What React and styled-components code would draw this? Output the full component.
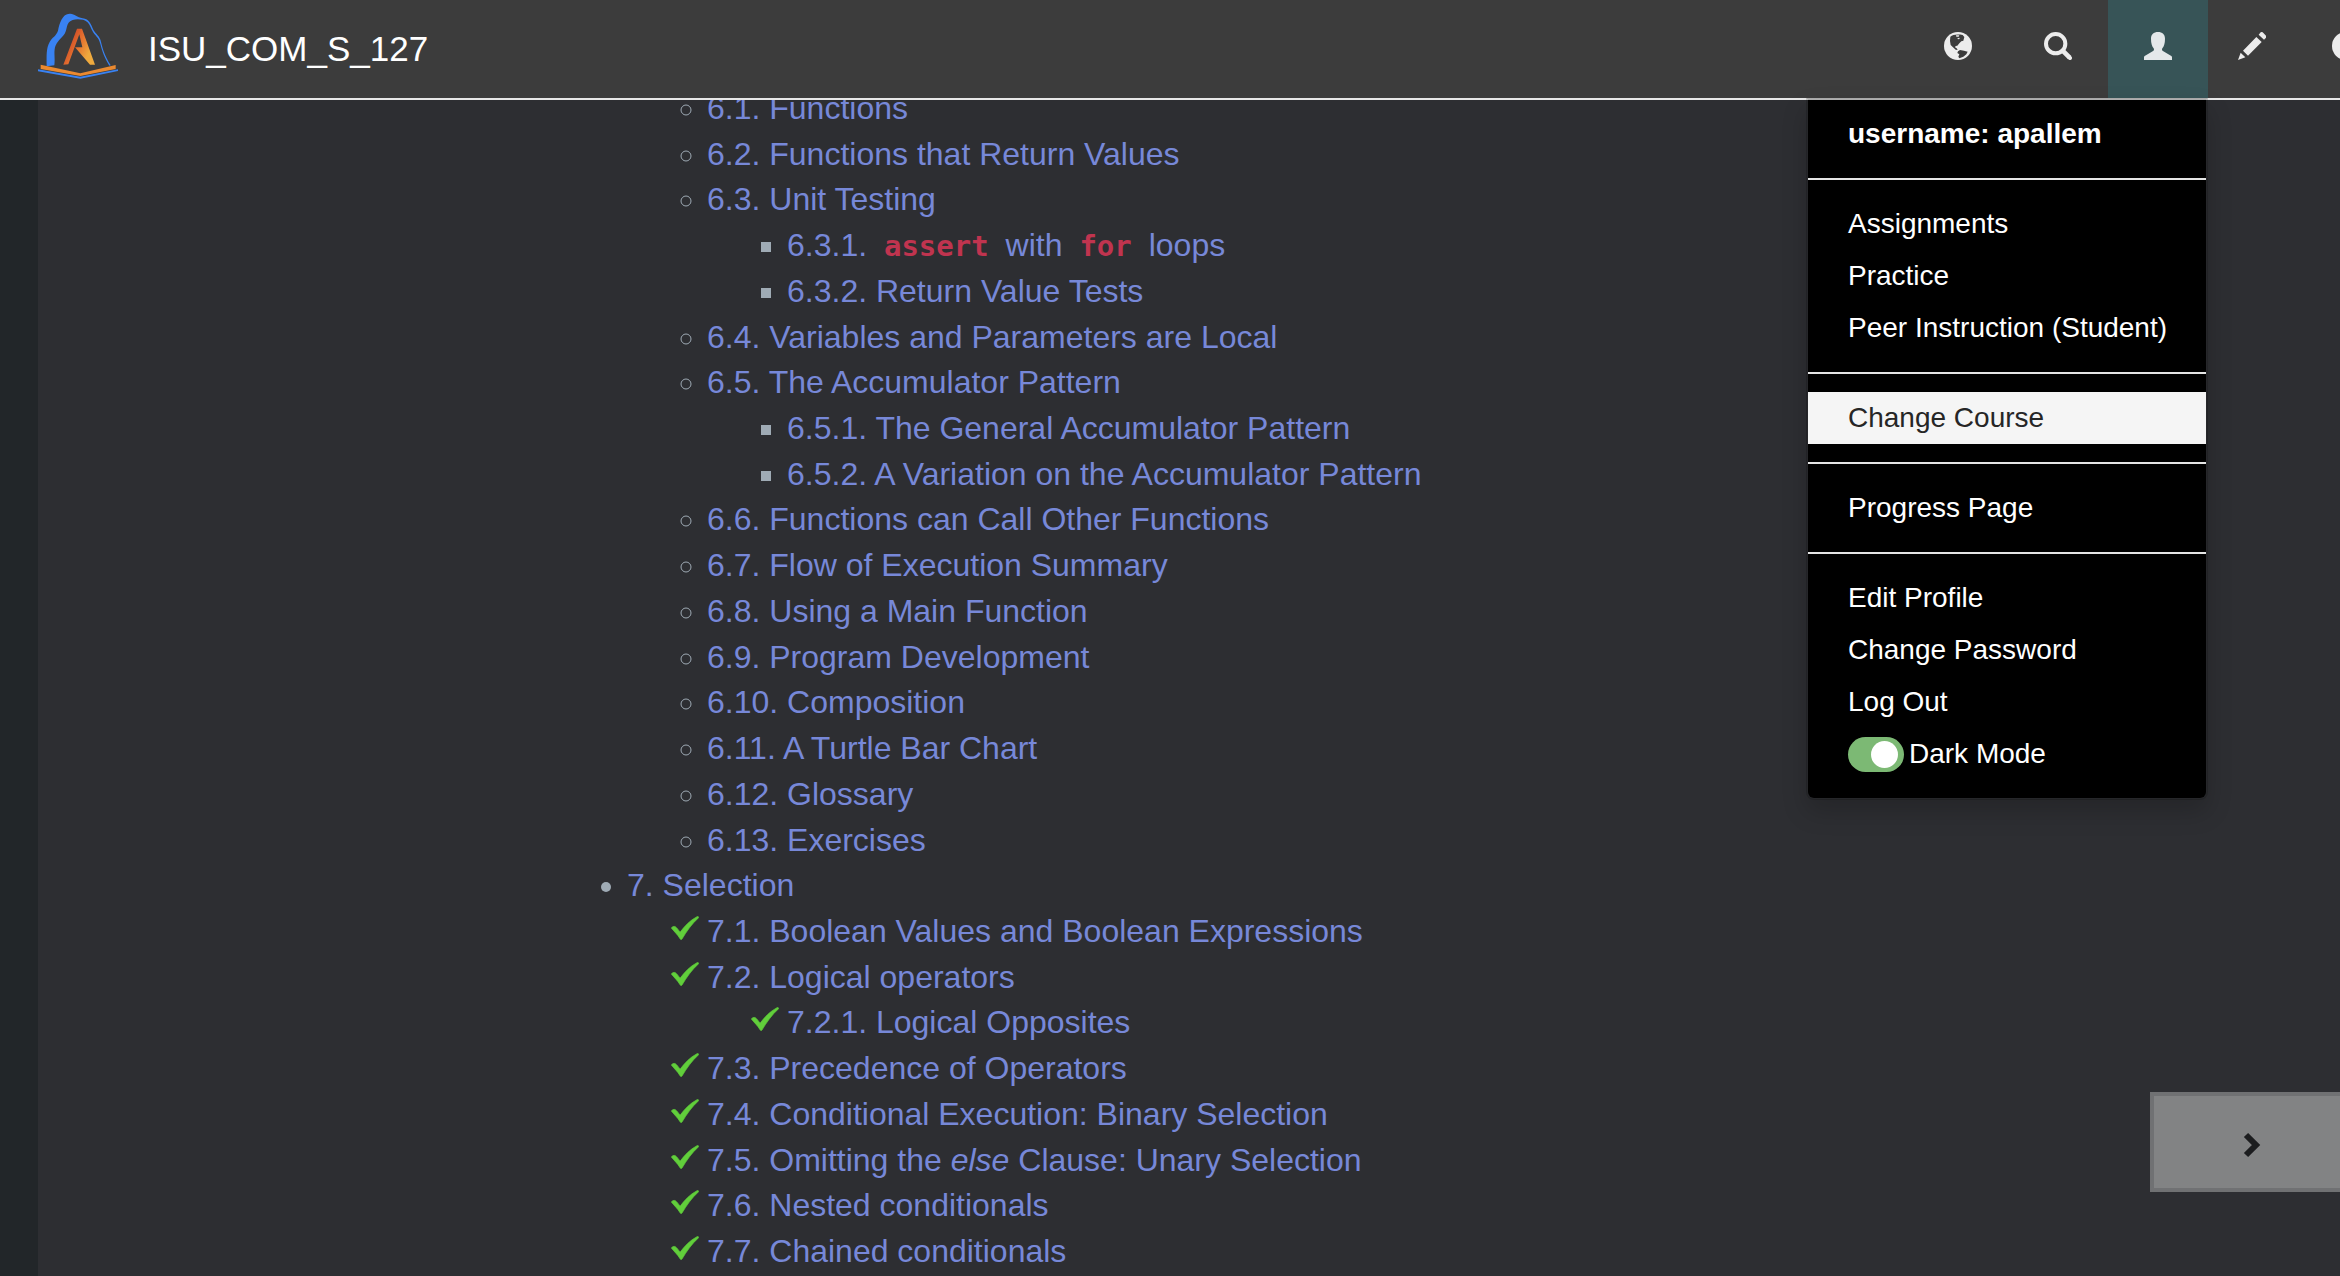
import React from "react";
import styled, { createGlobalStyle, css } from "styled-components";

const GlobalStyle = createGlobalStyle`
  * { box-sizing: border-box; }
  body {
    margin: 0;
    background: #222629;
    font-family: "Liberation Sans", Arial, sans-serif;
  }
`;

const Page = styled.div`
  display: flex;
  flex-direction: column;
  height: 100vh;
  overflow: hidden;
`;

const Navbar = styled.header`
  position: relative;
  z-index: 2;
  flex: none;
  display: flex;
  justify-content: space-between;
  height: 100px;
  background: #3c3c3c;
  border-bottom: 2px solid #e7e7e7;
`;

const Brand = styled.a`
  display: flex;
  align-items: center;
  gap: 30px;
  padding-left: 38px;
  color: #fff;
  font-size: 35px;
  line-height: 40px;
  text-decoration: none;
`;

const Logo = styled.svg`
  display: block;
  width: 80px;
  height: 66px;
  margin-bottom: 6px;
`;

const NavItems = styled.ul`
  display: flex;
  margin: 0 -56px 0 0;
  padding: 0;
  list-style: none;
`;

const NavItem = styled.li`
  position: relative;
  display: flex;
`;

const NavButton = styled.button`
  display: flex;
  justify-content: center;
  align-items: flex-start;
  width: ${(p) => (p.$narrow ? 88 : 100)}px;
  margin: 0 ${(p) => (p.$narrow ? 6 : 0)}px 0 0;
  padding: 32px 0 0;
  border: 0;
  background: ${(p) => (p.$open ? "#375457" : "transparent")};
  color: ${(p) => (p.$open ? "#e4e8ea" : "#ececec")};
`;

const NavIcon = styled.svg`
  display: block;
  width: 28px;
  height: 28px;
`;

const Menu = styled.div`
  position: absolute;
  top: 98px;
  right: 0;
  width: 402px;
  padding: 12px 0 18px;
  border: 2px solid rgba(0, 0, 0, 0.15);
  border-top-color: rgba(0, 0, 0, 0.25);
  border-radius: 0 0 8px 8px;
  background: #000;
  background-clip: padding-box;
  box-shadow: 0 12px 24px rgba(0, 0, 0, 0.175);
  color: #fff;
  font-size: 28px;
  line-height: 40px;
`;

const menuRow = css`
  display: flex;
  align-items: center;
  padding: 6px 40px;
  white-space: nowrap;
`;

const MenuHeading = styled.div`
  ${menuRow}
  padding-top: 2px;
  font-weight: 700;
`;

const MenuLink = styled.a`
  ${menuRow}
  color: ${(p) => (p.$active ? "#262626" : "#fff")};
  background: ${(p) => (p.$active ? "#f5f5f5" : "transparent")};
  text-decoration: none;
`;

const MenuDivider = styled.hr`
  height: 2px;
  margin: 18px 0;
  border: 0;
  background: #e5e5e5;
`;

const SwitchLabel = styled.label`
  ${menuRow}
  gap: 5px;
`;

const Switch = styled.input`
  appearance: none;
  display: flex;
  align-items: center;
  justify-content: flex-start;
  width: 56px;
  height: 35px;
  margin: 0;
  padding: 0 6px;
  border-radius: 18px;
  background: #888;

  &:checked {
    justify-content: flex-end;
    background: #7cb974;
  }

  &::before {
    content: "";
    width: 27px;
    height: 27px;
    border-radius: 50%;
    background: #fff;
  }
`;

const Main = styled.main`
  flex: 1;
  min-height: 0;
  display: flex;
  justify-content: center;
  margin-left: 38px;
  padding-right: 38px;
  overflow: hidden;
  background: #2d2e32;
`;

const Contents = styled.nav`
  width: 1246px;
  margin-top: -14px;
  font-size: 32px;
  line-height: 1.429;
`;

const List = styled.ul`
  margin: 0;
  padding-left: 80px;
  list-style: ${(p) => p.$marker};
`;

const Entry = styled.li`
  &::marker {
    color: #9fabb5;
  }
  ${(p) => p.$plain && "list-style: none;"}
`;

const EntryLink = styled.a`
  color: #7788d8;
  text-decoration: none;
`;

const Code = styled.code`
  padding: 0 8px;
  color: #c0344f;
  font-family: "DejaVu Sans Mono", monospace;
  font-size: 29px;
  font-weight: 700;
  line-height: 1;
`;

const CheckIcon = styled.svg`
  width: 28px;
  height: 24px;
  margin: 0 8px 2px -36px;
`;

const NextButton = styled.button`
  position: fixed;
  right: 0;
  bottom: 84px;
  display: flex;
  align-items: center;
  width: 190px;
  height: 100px;
  padding: 6px 0 0 89px;
  border: 4px solid #707173;
  border-right: 0;
  background: #828384;
`;

function Check() {
  return (
    <CheckIcon viewBox="0 0 84 72" role="img" aria-label="Completed">
      <path
        d="M1 36c2-4 8-6 12-4 5 4 10 10 14 17C41 30 57 13 78 2c4-1 6 1 4 4C62 24 47 46 33 69c-2 3-4 2-6-1C20 56 10 47 1 36z"
        fill="#61cf3b"
        stroke="#61cf3b"
        strokeWidth="2"
      />
    </CheckIcon>
  );
}

function RockLogo() {
  return (
    <Logo viewBox="24 38 240 198" aria-hidden="true">
      <defs>
        <linearGradient id="letter" x1="0" y1="0" x2="1" y2="0.6">
          <stop offset="0.25" stopColor="#cf4a26" />
          <stop offset="0.55" stopColor="#e4702f" />
          <stop offset="0.9" stopColor="#efaa3e" />
        </linearGradient>
      </defs>
      <path
        d="M50 198C50 165 48 145 59 125C66 111 79 107 84 91C88 68 98 38 121 40C134 41 141 50 158 54C178 56 183 73 190 88C197 101 211 108 213 125C219 147 222 162 242 195L238 196C218 163 216 147 210 128C207 112 194 105 187 91C180 77 176 62 159 58C142 55 125 56 117 66C109 75 111 89 104 100C96 113 80 122 75 141C71 159 76 174 73 195Z"
        fill="#3982f2"
      />
      <path
        d="M141 85H156L195 193H180L135 141H157L148 102L115 192L100 193Z"
        fill="url(#letter)"
      />
      <path d="M32 193L151 219L257 194V206L151 227L32 206Z" fill="#ea8930" />
      <path d="M24 207L151 229L264 207V212L151 235L24 213Z" fill="#3982f2" />
    </Logo>
  );
}

function GlobeIcon() {
  return (
    <NavIcon viewBox="0 0 84 84" aria-hidden="true">
      <circle cx="42" cy="42" r="42" fill="currentColor" />
      <path
        d="M19 14C26 8 40 6 56 9L61 15L58 26L52 28L46 34L40 41L35 42L33 46L38 49L41 54L35 53L27 46L20 39L18 27Z"
        fill="#3c3c3c"
      />
      <path d="M42 58L48 54L60 56L71 59L67 67L58 74L46 79L43 74L46 67L40 63Z" fill="#3c3c3c" />
      <path d="M36 10H46L44 14H37ZM40 19L46 17L47 21L42 22Z" fill="currentColor" />
    </NavIcon>
  );
}

function SearchIcon() {
  return (
    <NavIcon viewBox="0 0 84 84" fill="none" stroke="currentColor" aria-hidden="true">
      <circle cx="35" cy="35" r="29" strokeWidth="12" />
      <path d="M56 56L77 77" strokeWidth="14" />
      <path d="M76 76L78 78" strokeWidth="12" strokeLinecap="round" />
    </NavIcon>
  );
}

function UserIcon() {
  return (
    <NavIcon viewBox="0 0 84 84" fill="currentColor" aria-hidden="true">
      <path d="M42 0C29 0 21 7 21 20C21 34 24 43 29 49C31 53 30 56 26 58L2 72C1 73 0 74 0 76V84H84V76C84 74 83 73 82 72L58 58C54 56 53 53 55 49C60 43 63 34 63 20C63 7 55 0 42 0Z" />
    </NavIcon>
  );
}

function PencilIcon() {
  return (
    <NavIcon viewBox="0 0 84 84" fill="currentColor" aria-hidden="true">
      <path d="M0 84L8 62L22 76ZM15 56L55 15L71 30L30 71ZM62 8L68 1Q71 -1 74 1L84 11Q86 14 84 17L78 23Z" />
    </NavIcon>
  );
}

function HelpIcon() {
  return (
    <NavIcon viewBox="0 0 84 84" aria-hidden="true">
      <circle cx="42" cy="42" r="42" fill="currentColor" />
      <path d="M32 31Q32 19 43 19Q56 19 55 31Q54 38 43 44V54M43 60V70" fill="none" stroke="#3c3c3c" strokeWidth="10" />
    </NavIcon>
  );
}

const chapters = [
  {
    items: [
      { title: "6.1. Functions" },
      { title: "6.2. Functions that Return Values" },
      {
        title: "6.3. Unit Testing",
        items: [
          {
            title: (
              <>
                6.3.1. <Code>assert</Code> with <Code>for</Code> loops
              </>
            ),
          },
          { title: "6.3.2. Return Value Tests" },
        ],
      },
      { title: "6.4. Variables and Parameters are Local" },
      {
        title: "6.5. The Accumulator Pattern",
        items: [
          { title: "6.5.1. The General Accumulator Pattern" },
          { title: "6.5.2. A Variation on the Accumulator Pattern" },
        ],
      },
      { title: "6.6. Functions can Call Other Functions" },
      { title: "6.7. Flow of Execution Summary" },
      { title: "6.8. Using a Main Function" },
      { title: "6.9. Program Development" },
      { title: "6.10. Composition" },
      { title: "6.11. A Turtle Bar Chart" },
      { title: "6.12. Glossary" },
      { title: "6.13. Exercises" },
    ],
  },
  {
    title: "7. Selection",
    items: [
      { title: "7.1. Boolean Values and Boolean Expressions", done: true },
      {
        title: "7.2. Logical operators",
        done: true,
        items: [{ title: "7.2.1. Logical Opposites", done: true }],
      },
      { title: "7.3. Precedence of Operators", done: true },
      { title: "7.4. Conditional Execution: Binary Selection", done: true },
      {
        title: (
          <>
            7.5. Omitting the <em>else</em> Clause: Unary Selection
          </>
        ),
        done: true,
      },
      { title: "7.6. Nested conditionals", done: true },
      { title: "7.7. Chained conditionals", done: true },
    ],
  },
];

const markers = ["disc", "circle", "square"];

function Outline({ items, depth = 0 }) {
  return (
    <List $marker={markers[depth]}>
      {items.map((item, i) => (
        <Entry key={i} $plain={item.done || !item.title}>
          {item.done && <Check />}
          {item.title && <EntryLink href="#">{item.title}</EntryLink>}
          {item.items && <Outline items={item.items} depth={depth + 1} />}
        </Entry>
      ))}
    </List>
  );
}

function UserMenu() {
  return (
    <Menu>
      <MenuHeading>username: apallem</MenuHeading>
      <MenuDivider />
      <MenuLink href="#">Assignments</MenuLink>
      <MenuLink href="#">Practice</MenuLink>
      <MenuLink href="#">Peer Instruction (Student)</MenuLink>
      <MenuDivider />
      <MenuLink href="#" $active>Change Course</MenuLink>
      <MenuDivider />
      <MenuLink href="#">Progress Page</MenuLink>
      <MenuDivider />
      <MenuLink href="#">Edit Profile</MenuLink>
      <MenuLink href="#">Change Password</MenuLink>
      <MenuLink href="#">Log Out</MenuLink>
      <SwitchLabel htmlFor="dark-mode">
        <Switch id="dark-mode" type="checkbox" defaultChecked />
        Dark Mode
      </SwitchLabel>
    </Menu>
  );
}

export default function App() {
  return (
    <Page>
      <GlobalStyle />
      <Navbar>
        <Brand href="#">
          <RockLogo />
          ISU_COM_S_127
        </Brand>
        <NavItems>
          <NavItem>
            <NavButton aria-label="Social"><GlobeIcon /></NavButton>
          </NavItem>
          <NavItem>
            <NavButton aria-label="Search"><SearchIcon /></NavButton>
          </NavItem>
          <NavItem>
            <NavButton $open aria-label="User" aria-expanded="true"><UserIcon /></NavButton>
            <UserMenu />
          </NavItem>
          <NavItem>
            <NavButton $narrow aria-label="Scratch editor"><PencilIcon /></NavButton>
          </NavItem>
          <NavItem>
            <NavButton $narrow aria-label="Help"><HelpIcon /></NavButton>
          </NavItem>
        </NavItems>
      </Navbar>
      <Main>
        <Contents aria-label="Table of contents">
          <Outline items={chapters} />
        </Contents>
      </Main>
      <NextButton aria-label="Next section">
        <svg width="28" height="28" viewBox="0 0 28 28" fill="none" aria-hidden="true">
          <path d="M3 4L13 14L3 24" stroke="#1c1d1f" strokeWidth="6" />
        </svg>
      </NextButton>
    </Page>
  );
}
